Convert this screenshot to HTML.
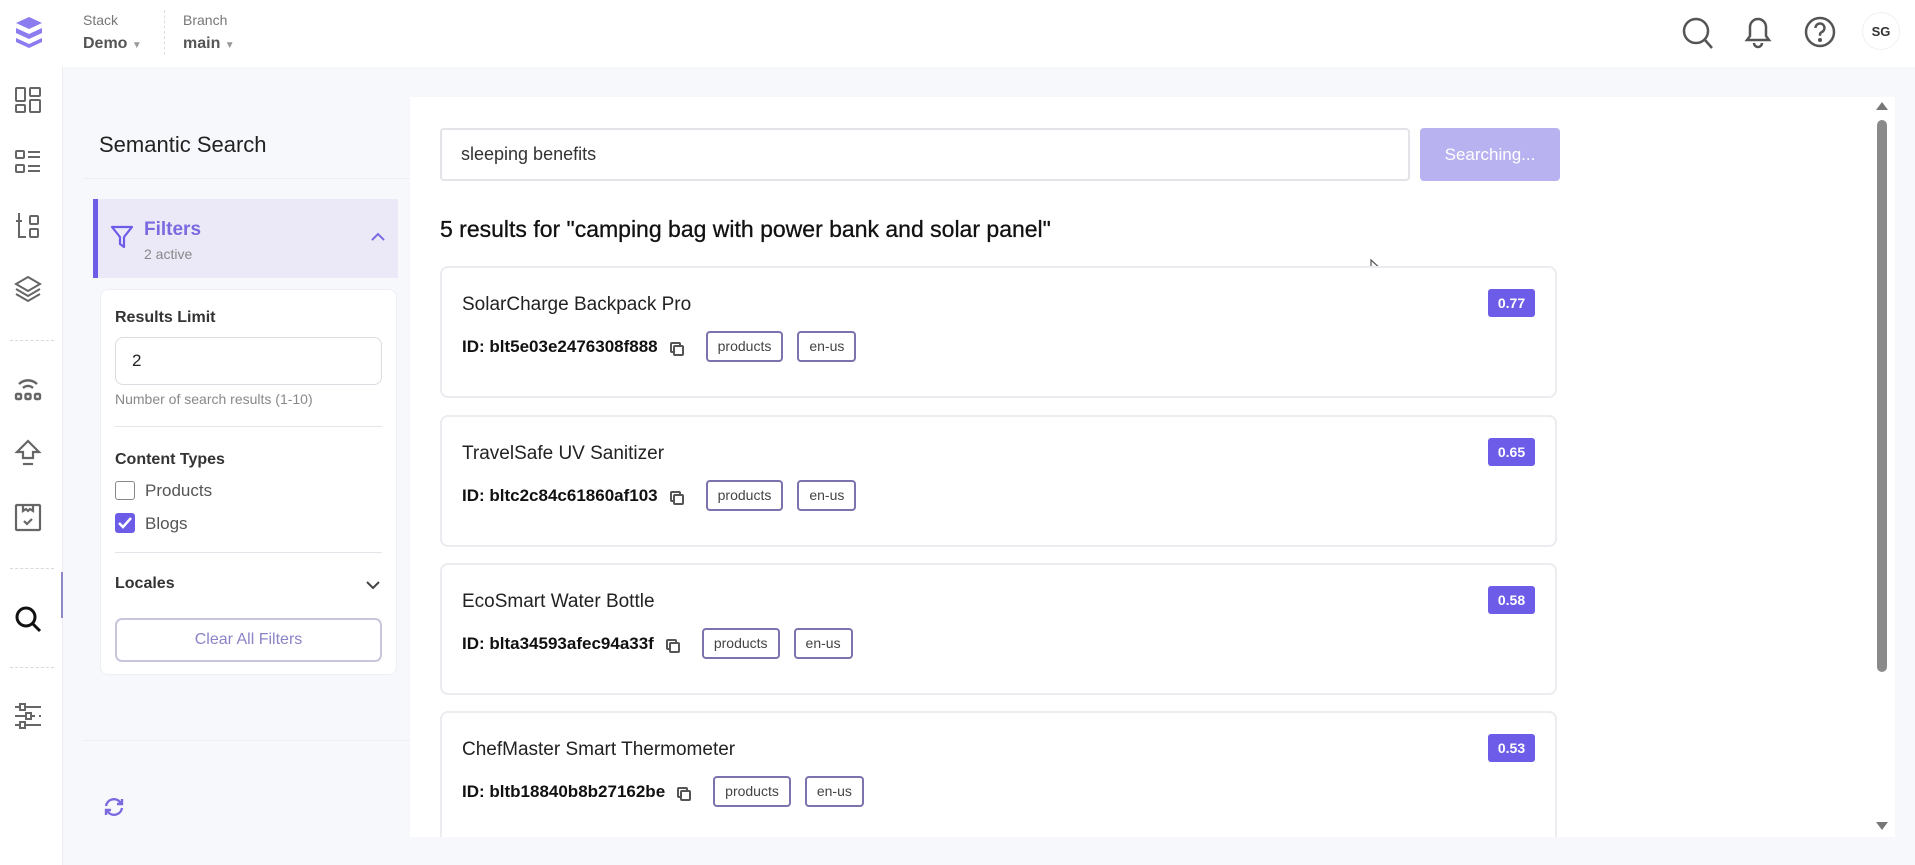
<!DOCTYPE html>
<html><head><meta charset="utf-8"><style>
*{box-sizing:border-box;margin:0;padding:0}
body{width:1915px;height:865px;overflow:hidden;background:#f7f8fc;font-family:"Liberation Sans",sans-serif;color:#222;position:relative}
.abs{position:absolute}
.top{left:0;top:0;width:1915px;height:67px;background:#fff}
.side{left:0;top:67px;width:63px;height:798px;background:#fff;border-right:1px solid #eceef3}
.ic{position:absolute;left:13px;width:30px;height:30px}
.sep{position:absolute;left:10px;width:44px;border-top:1px dashed #d8d8e0}
.panel{left:63px;top:67px;width:347px;height:798px;background:#f7f8fb}
.main{left:410px;top:97px;width:1485px;height:740px;background:#fff}
.card{position:absolute;left:440px;width:1117px;height:132px;border:2px solid #ececf0;border-radius:8px;background:#fff}
.card .t{position:absolute;left:20px;top:26px;font-size:19px;color:#222}
.card .id{position:absolute;left:20px;top:63px;font-size:17px;font-weight:bold;color:#111;display:flex;align-items:center}
.tag{display:inline-block;height:31px;line-height:27px;padding:0 10px;border:2px solid #7a73ad;border-radius:4px;font-size:14px;font-weight:normal;color:#444;margin-left:14px}
.cp{margin-left:12px;width:10px;height:10px;position:relative}
.cp:before,.cp:after{content:"";position:absolute;width:7px;height:7px;border:2px solid #555;border-radius:2px}
.cp:before{left:0;top:0}.cp:after{left:3px;top:3px;background:#fff}
.badge{position:absolute;right:20px;top:21px;width:47px;height:28px;background:#6c5ce7;border-radius:3px;color:#fff;font-weight:bold;font-size:14px;text-align:center;line-height:28px}
</style></head><body>
<div class="abs top"></div>
<svg class="abs" style="left:14px;top:16px" width="30" height="32" viewBox="0 0 30 32"><path d="M15 1L28 7 15 13 2 7Z M2 12l13 6 13-6v5l-13 6-13-6z M2 22l13 6 13-6v4l-13 6-13-6z" fill="#8b7cf0"/></svg>
<div class="abs" style="left:83px;top:12px;font-size:14px;color:#777">Stack</div>
<div class="abs" style="left:83px;top:35px;font-size:16px;font-weight:bold;color:#555">Demo <span style="font-size:10px;color:#999">▼</span></div>
<div class="abs" style="left:164px;top:10px;height:45px;border-left:1px dashed #ddd"></div>
<div class="abs" style="left:183px;top:12px;font-size:14px;color:#777">Branch</div>
<div class="abs" style="left:183px;top:35px;font-size:16px;font-weight:bold;color:#555">main <span style="font-size:10px;color:#999">▼</span></div>
<svg class="abs" style="left:1682px;top:16px" width="32" height="34" viewBox="0 0 32 34" fill="none" stroke="#555" stroke-width="2.5"><circle cx="14" cy="15" r="12"/><path d="M23 24l7 8"/></svg>
<svg class="abs" style="left:1742px;top:14px" width="32" height="36" viewBox="0 0 32 36" fill="none" stroke="#555" stroke-width="2.5"><path d="M5 26h22l-3-4V13a8 8 0 0 0-16 0v9z"/><path d="M12 29a4 4 0 0 0 8 0"/></svg>
<svg class="abs" style="left:1804px;top:16px" width="32" height="32" viewBox="0 0 32 32" fill="none" stroke="#555" stroke-width="2.5"><circle cx="16" cy="16" r="14"/><path d="M11.5 12a4.5 4.5 0 1 1 6 4.2c-1 .5-1.5 1.3-1.5 2.5v1"/><circle cx="16" cy="24" r="0.8" fill="#555"/></svg>
<div class="abs" style="left:1862px;top:12px;width:38px;height:38px;border-radius:50%;border:1px solid #f0f0f0;font-size:13px;font-weight:bold;color:#333;text-align:center;line-height:38px">SG</div>

<div class="abs side">
<svg class="ic" style="top:18px" viewBox="0 0 30 30" fill="none" stroke="#666" stroke-width="2"><rect x="3" y="3" width="9" height="13" rx="1"/><rect x="17" y="3" width="10" height="8" rx="1"/><rect x="3" y="20" width="9" height="7" rx="1"/><rect x="17" y="15" width="10" height="12" rx="1"/></svg>
<svg class="ic" style="top:80px" viewBox="0 0 30 30" fill="none" stroke="#666" stroke-width="2"><rect x="3" y="4" width="8" height="7" rx="1"/><rect x="3" y="18" width="8" height="7" rx="1"/><path d="M15 5h12M15 10h12M15 19h12M15 24h12"/></svg>
<svg class="ic" style="top:144px" viewBox="0 0 30 30" fill="none" stroke="#666" stroke-width="2"><path d="M6 2v24h7M3 10h6"/><rect x="17" y="5" width="8" height="8" rx="1"/><rect x="17" y="18" width="8" height="8" rx="1"/></svg>
<svg class="ic" style="top:207px" viewBox="0 0 30 30" fill="none" stroke="#666" stroke-width="2"><path d="M15 3L27 10 15 17 3 10Z M3 15l12 7 12-7 M3 20l12 7 12-7"/></svg>
<div class="sep" style="top:273px"></div>
<svg class="ic" style="top:306px" viewBox="0 0 30 30" fill="none" stroke="#666" stroke-width="2.4"><path d="M6 11a13 13 0 0 1 18 0M10 15a7 7 0 0 1 10 0"/><rect x="3" y="21" width="5" height="5" rx="1"/><rect x="12.5" y="21" width="5" height="5" rx="1"/><rect x="22" y="21" width="5" height="5" rx="1"/></svg>
<svg class="ic" style="top:371px" viewBox="0 0 30 30" fill="none" stroke="#666" stroke-width="2.2"><path d="M15 3L4 14h6v6h10v-6h6z"/><path d="M10 26h10"/></svg>
<svg class="ic" style="top:435px" viewBox="0 0 30 30" fill="none" stroke="#666" stroke-width="2.2"><rect x="3" y="3" width="24" height="25" rx="1"/><path d="M10 3v6l3-2 2 2 2-2 3 2V3M11 19l3 3 5-5"/></svg>
<div class="sep" style="top:501px"></div>
<svg class="ic" style="top:537px" viewBox="0 0 30 30" fill="none" stroke="#111" stroke-width="3"><circle cx="13" cy="13" r="9"/><path d="M20 20l7 7"/></svg>
<div class="abs" style="left:61px;top:505px;width:2px;height:46px;background:#8e87c9"></div>
<div class="sep" style="top:600px"></div>
<svg class="ic" style="top:635px" viewBox="0 0 30 30" fill="none" stroke="#666" stroke-width="2"><path d="M2 5h5M13 5h15M2 14h11M19 14h3M26 14h2M2 23h5M13 23h15"/><rect x="7" y="2" width="5" height="6"/><rect x="13" y="11" width="5" height="6"/><rect x="7" y="20" width="5" height="6"/></svg>
</div>

<div class="abs panel"></div>
<div class="abs" style="left:99px;top:132px;font-size:22px;color:#222">Semantic Search</div>
<div class="abs" style="left:83px;top:178px;width:327px;border-top:1px solid #eceef3"></div>
<div class="abs" style="left:93px;top:199px;width:305px;height:79px;background:#ebe9f8;border-left:5px solid #6c5ce7"></div>
<svg class="abs" style="left:110px;top:224px" width="24" height="26" viewBox="0 0 24 26" fill="none" stroke="#6c5ce7" stroke-width="2.2" stroke-linejoin="round"><path d="M2 3h20l-8 10v10l-4-3v-7z"/></svg>
<div class="abs" style="left:144px;top:219px;font-size:19px;font-weight:bold;color:#7a6ae0">Filters</div>
<div class="abs" style="left:144px;top:246px;font-size:14px;color:#888">2 active</div>
<svg class="abs" style="left:370px;top:232px" width="16" height="10" viewBox="0 0 16 10" fill="none" stroke="#7a6ae0" stroke-width="2"><path d="M2 8l6-6 6 6"/></svg>
<div class="abs" style="left:100px;top:289px;width:297px;height:386px;background:#fff;border:1px solid #eeeff3;border-radius:8px"></div>
<div class="abs" style="left:115px;top:309px;font-size:16px;font-weight:bold;color:#333">Results Limit</div>
<div class="abs" style="left:115px;top:337px;width:267px;height:48px;border:1px solid #dcdce2;border-radius:8px;font-size:17px;padding:13px 0 0 16px;color:#222">2</div>
<div class="abs" style="left:115px;top:391px;font-size:14px;color:#888">Number of search results (1-10)</div>
<div class="abs" style="left:115px;top:426px;width:267px;border-top:1px solid #e4e4ea"></div>
<div class="abs" style="left:115px;top:451px;font-size:16px;font-weight:bold;color:#333">Content Types</div>
<div class="abs" style="left:115px;top:481px;width:20px;height:19px;border:1.5px solid #888;border-radius:3px"></div>
<div class="abs" style="left:145px;top:481px;font-size:17px;color:#555">Products</div>
<div class="abs" style="left:115px;top:513px;width:20px;height:20px;background:#6c5ce7;border-radius:3px"></div>
<svg class="abs" style="left:117px;top:516px" width="16" height="14" viewBox="0 0 16 14" fill="none" stroke="#fff" stroke-width="2.5"><path d="M2 7l4 4 8-9"/></svg>
<div class="abs" style="left:145px;top:514px;font-size:17px;color:#555">Blogs</div>
<div class="abs" style="left:115px;top:552px;width:267px;border-top:1px solid #e4e4ea"></div>
<div class="abs" style="left:115px;top:575px;font-size:16px;font-weight:bold;color:#333">Locales</div>
<svg class="abs" style="left:365px;top:580px" width="16" height="10" viewBox="0 0 16 10" fill="none" stroke="#444" stroke-width="2"><path d="M2 2l6 6 6-6"/></svg>
<div class="abs" style="left:115px;top:618px;width:267px;height:44px;border:2px solid #c9c6dc;border-radius:7px;text-align:center;line-height:40px;font-size:16px;color:#8a84c6">Clear All Filters</div>
<div class="abs" style="left:83px;top:740px;width:327px;border-top:1px solid #eceef3"></div>
<svg class="abs" style="left:103px;top:796px" width="22" height="22" viewBox="0 0 22 22" fill="none" stroke="#7a6ae0" stroke-width="2.4"><path d="M3 10a8 8 0 0 1 14-4l2 2M19 12a8 8 0 0 1-14 4l-2-2"/><path d="M19 3v5h-5M3 19v-5h5"/></svg>

<div class="abs main"></div>
<div class="abs" style="left:440px;top:128px;width:970px;height:53px;border:2px solid #e4e4e8;border-radius:4px;font-size:18px;color:#333;padding:14px 0 0 19px">sleeping benefits</div>
<div class="abs" style="left:1420px;top:128px;width:140px;height:53px;background:#b9b2f0;border-radius:4px;color:#fff;font-size:17px;text-align:center;line-height:53px">Searching...</div>
<div class="abs" style="left:440px;top:216px;font-size:23px;color:#111;-webkit-text-stroke:0.3px #111">5 results for "camping bag with power bank and solar panel"</div>
<svg class="abs" style="left:1370px;top:259px" width="14" height="20" viewBox="0 0 14 20"><path d="M1 1v15l4-4 3 6 2-1-3-6h5z" fill="#fff" stroke="#555" stroke-width="1.2"/></svg>

<div class="card" style="top:266px"><div class="t">SolarCharge Backpack Pro</div><div class="id">ID: blt5e03e2476308f888<span class="cp"></span><span class="tag" style="margin-left:26px">products</span><span class="tag">en-us</span></div><div class="badge">0.77</div></div>
<div class="card" style="top:415px"><div class="t">TravelSafe UV Sanitizer</div><div class="id">ID: bltc2c84c61860af103<span class="cp"></span><span class="tag" style="margin-left:26px">products</span><span class="tag">en-us</span></div><div class="badge">0.65</div></div>
<div class="card" style="top:563px"><div class="t">EcoSmart Water Bottle</div><div class="id">ID: blta34593afec94a33f<span class="cp"></span><span class="tag" style="margin-left:26px">products</span><span class="tag">en-us</span></div><div class="badge">0.58</div></div>
<div class="card" style="top:711px;height:140px"><div class="t">ChefMaster Smart Thermometer</div><div class="id">ID: bltb18840b8b27162be<span class="cp"></span><span class="tag" style="margin-left:26px">products</span><span class="tag">en-us</span></div><div class="badge">0.53</div></div>
<div class="abs" style="left:410px;top:837px;width:1505px;height:28px;background:#f7f8fc"></div>

<div class="abs" style="left:1876px;top:102px;width:0;height:0;border-left:6px solid transparent;border-right:6px solid transparent;border-bottom:8px solid #777"></div>
<div class="abs" style="left:1877px;top:120px;width:10px;height:552px;background:#8a8a8a;border-radius:5px"></div>
<div class="abs" style="left:1876px;top:822px;width:0;height:0;border-left:6px solid transparent;border-right:6px solid transparent;border-top:8px solid #777"></div>
<div class="abs" style="left:1895px;top:67px;width:20px;height:798px;background:#f7f8fc"></div>
</body></html>
